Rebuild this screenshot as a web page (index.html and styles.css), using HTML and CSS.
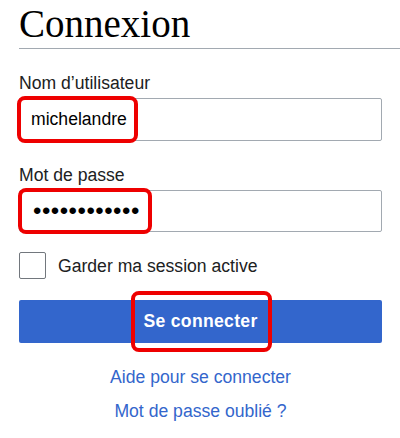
FILE: index.html
```html
<!DOCTYPE html>
<html lang="fr">
<head>
  <meta charset="UTF-8" />
  <meta name="viewport" content="width=device-width, initial-scale=1.0"/>
  <title>Connexion</title>
  <link rel="stylesheet" href="styles.css">
</head>
<body>
  <main class="login">
    <h1 class="login-title">Connexion</h1>

    <form class="login-form" onsubmit="return false">
      <label class="field-label" for="username">Nom d’utilisateur</label>
      <input class="field-input" type="text" id="username" value="michelandre" />

      <label class="field-label" for="password">Mot de passe</label>
      <input class="field-input field-password" type="password" id="password" value="motdepasse12" />

      <label class="remember">
        <input type="checkbox" class="remember-box" />
        <span>Garder ma session active</span>
      </label>

      <button type="submit" class="submit">Se connecter</button>

      <a class="help-link" href="#">Aide pour se connecter</a>
      <a class="help-link help-link-last" href="#">Mot de passe oublié ?</a>
    </form>

    <!-- red annotation frames drawn over the form -->
    <div class="mark mark-user"></div>
    <div class="mark mark-pass"></div>
    <div class="mark mark-submit"></div>
  </main>
</body>
</html>
```

FILE: styles.css
```css
body {
  margin: 0;
  background: #fff;
  color: #202122;
  font-family: 'Liberation Sans', Arial, sans-serif;
  font-size: 17.6px;
}
.login {
  position: relative;
  padding-left: 19px;
}
.login-title {
  margin: 0;
  font-family: 'Liberation Serif', 'Times New Roman', serif;
  font-weight: normal;
  font-size: 39px;
  line-height: 48px;
  color: #000;
  border-bottom: 1px solid #a2a9b1;
}
.login-form {
  width: 363px;
}
.field-label {
  display: block;
  margin-top: 23px;
  line-height: 22px;
  color: #202122;
}
.field-input {
  display: block;
  width: 100%;
  height: 43px;
  margin-top: 4px;
  padding: 0 11px;
  box-sizing: border-box;
  border: 1px solid #a2a9b1;
  border-radius: 2px;
  font-family: inherit;
  font-size: 17.6px;
  color: #000;
  outline: none;
}
.field-password {
  height: 42px;
  padding-left: 13px;
  font-size: 24px;
  letter-spacing: 0.5px;
}
.remember {
  display: flex;
  align-items: center;
  gap: 12px;
  margin-top: 20px;
  line-height: 22px;
}
.remember-box {
  appearance: none;
  width: 27px;
  height: 27px;
  margin: 0;
  border: 1px solid #72777d;
  border-radius: 2px;
  background: #fff;
}
.submit {
  display: block;
  width: 100%;
  height: 43px;
  margin-top: 21px;
  border: none;
  border-radius: 2px;
  background-color: #36c;
  color: #fff;
  font-family: inherit;
  font-size: 17.6px;
  font-weight: bold;
  letter-spacing: 0.3px;
  cursor: pointer;
}
.help-link {
  display: block;
  margin-top: 23px;
  line-height: 22px;
  text-align: center;
  color: #36c;
  text-decoration: none;
}
.help-link-last {
  margin-top: 12px;
}
/* annotation frames */
.mark {
  position: absolute;
  box-sizing: border-box;
  border: 4px solid #ee0000;
  border-radius: 8px;
}
.mark-user {
  left: 17px;
  top: 96px;
  width: 121px;
  height: 47px;
}
.mark-pass {
  left: 18px;
  top: 188px;
  width: 134px;
  height: 46px;
}
.mark-submit {
  left: 131px;
  top: 291px;
  width: 141px;
  height: 61px;
}
```
